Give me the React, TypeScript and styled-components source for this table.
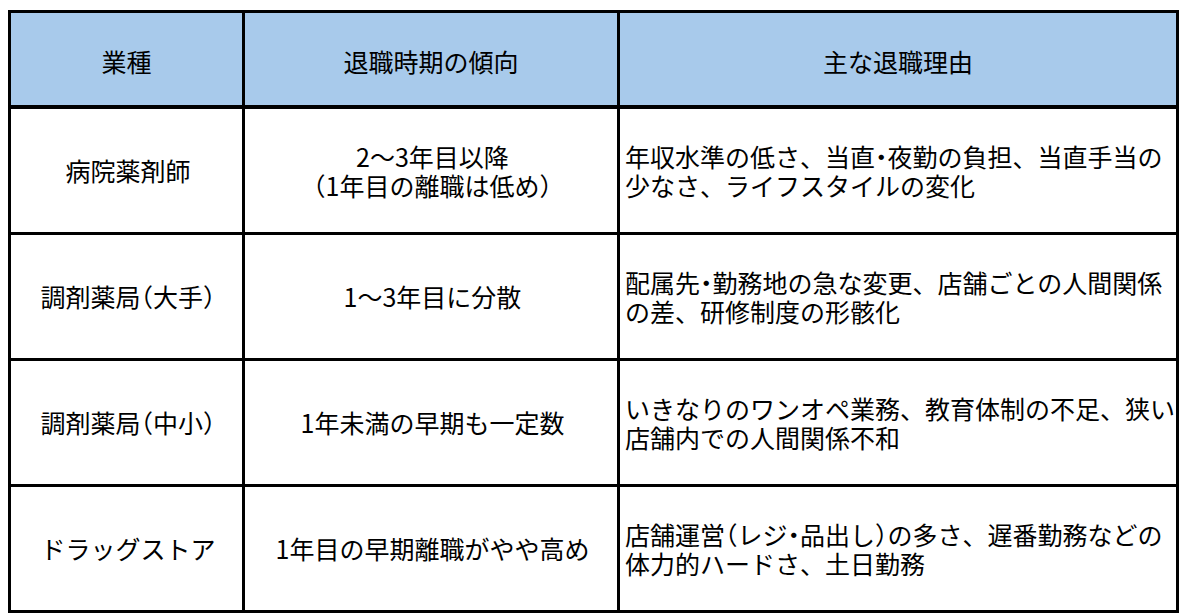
import styled, { createGlobalStyle } from 'styled-components';
import type { ReactNode } from 'react';

const GlobalStyle = createGlobalStyle`
  html, body {
    margin: 0;
    padding: 0;
    background: #ffffff;
  }
  body {
    font-family: "Noto Sans CJK JP", "Noto Sans", sans-serif;
    color: #000000;
  }
`;

type Row = {
  kind: string;
  timing: string[];
  reasons: string[];
};

const rows: Row[] = [
  {
    kind: '病院薬剤師',
    timing: ['2〜3年目以降', '（1年目の離職は低め）'],
    reasons: ['年収水準の低さ、当直・夜勤の負担、当直手当の', '少なさ、ライフスタイルの変化'],
  },
  {
    kind: '調剤薬局（大手）',
    timing: ['1〜3年目に分散'],
    reasons: ['配属先・勤務地の急な変更、店舗ごとの人間関係', 'の差、研修制度の形骸化'],
  },
  {
    kind: '調剤薬局（中小）',
    timing: ['1年未満の早期も一定数'],
    reasons: ['いきなりのワンオペ業務、教育体制の不足、狭い', '店舗内での人間関係不和'],
  },
  {
    kind: 'ドラッグストア',
    timing: ['1年目の早期離職がやや高め'],
    reasons: ['店舗運営（レジ・品出し）の多さ、遅番勤務などの', '体力的ハードさ、土日勤務'],
  },
];

// middle dots and brackets are set half width in the source
const withNarrowPunct = (text: string): ReactNode[] =>
  text.split(/([・（）])/).filter(Boolean).map((part, i) =>
    /^[・（）]$/.test(part) ? <Narrow key={i}>{part}</Narrow> : part
  );

const App = () => {
  return (
    <Page>
      <GlobalStyle />
      <Table>
        <colgroup>
          <col style={{ width: 234 }} />
          <col style={{ width: 375 }} />
          <col style={{ width: 559 }} />
        </colgroup>
        <thead>
          <tr>
            <HeadCell>業種</HeadCell>
            <HeadCell>退職時期の傾向</HeadCell>
            <HeadCell>主な退職理由</HeadCell>
          </tr>
        </thead>
        <tbody>
          {rows.map((row) => (
            <BodyRow key={row.kind}>
              <Cell $align="center">{withNarrowPunct(row.kind)}</Cell>
              <Cell $align="center">
                {row.timing.map((line) => (
                  <Line key={line}>{withNarrowPunct(line)}</Line>
                ))}
              </Cell>
              <Cell $align="left">
                {row.reasons.map((line) => (
                  <Line key={line}>{withNarrowPunct(line)}</Line>
                ))}
              </Cell>
            </BodyRow>
          ))}
        </tbody>
      </Table>
    </Page>
  );
};

const Page = styled.div`
  padding: 10px 0 0 8px;
`;

const Table = styled.table`
  width: 1171px;
  table-layout: fixed;
  border-collapse: separate;
  border-spacing: 0;
  border-top: 3px solid #000;
  border-left: 3px solid #000;
  font-size: 25px;
  line-height: 29px;
`;

const HeadCell = styled.th`
  box-sizing: border-box;
  height: 96px;
  padding: 4px 0 0;
  background: #a8caeb;
  font-weight: 400;
  text-align: center;
  vertical-align: middle;
  border-right: 3px solid #000;
  border-bottom: 4px solid #000;
`;

const BodyRow = styled.tr`
  height: 126px;
`;

const Cell = styled.td<{ $align: 'left' | 'center' }>`
  box-sizing: border-box;
  padding: 0 2px 0 5px;
  text-align: ${({ $align }) => $align};
  vertical-align: middle;
  white-space: nowrap;
  border-right: 3px solid #000;
  border-bottom: 3px solid #000;
`;

const Line = styled.div`
  display: block;
`;

const Narrow = styled.span`
  font-feature-settings: "halt";
`;

export default App;
